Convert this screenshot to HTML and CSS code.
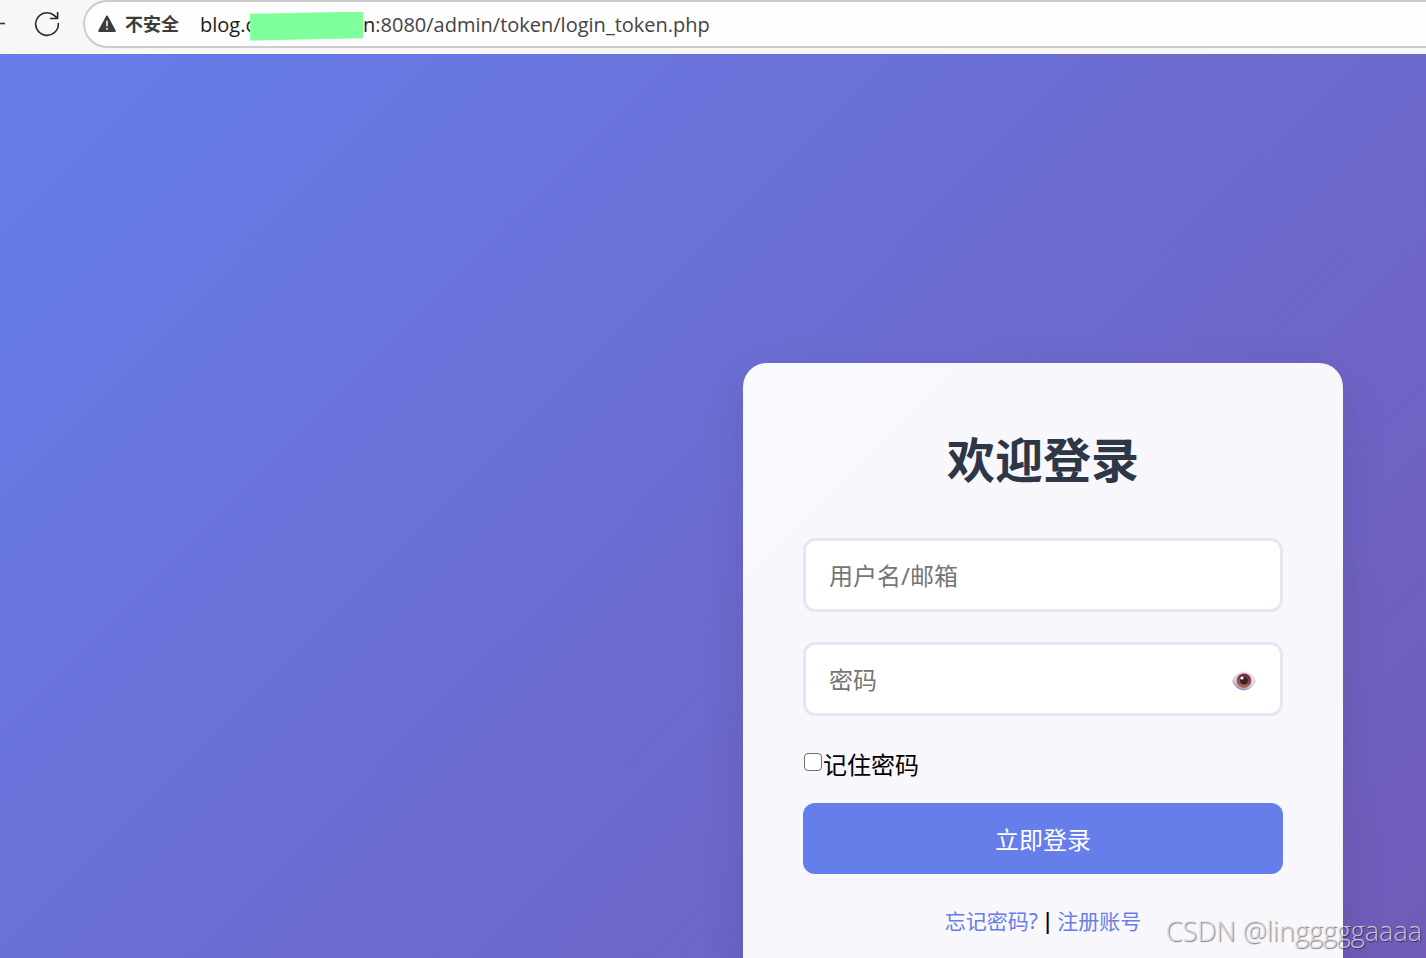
FILE: index.html
```html
<!DOCTYPE html>
<html lang="zh-CN">
<head>
<meta charset="utf-8">
<title>欢迎登录</title>
<link rel="stylesheet" href="styles.css">
</head>
<body>
<header class="toolbar">
  <button class="nav-button back" type="button" aria-label="返回">
    <svg width="6" height="24" viewBox="0 0 6 24" fill="none" stroke="#333" stroke-width="1.6"><path d="M0 11.5h5"/></svg>
  </button>
  <button class="nav-button reload" type="button" aria-label="刷新">
    <svg width="26" height="26" viewBox="0 0 26 26" fill="none" stroke="#2b2b2b" stroke-width="1.6" stroke-linecap="round" stroke-linejoin="round"><path d="M24.300 12.500A11.300 11.300 0 1 1 20.500 4.600L23.400 7.300M23.600 1.500v6h-7"/></svg>
  </button>
  <div class="address">
    <svg class="warning" width="18" height="18" viewBox="0 0 18 18"><path d="M9 1.500 16.800 16H1.200Z" fill="#3c3c3c" stroke="#3c3c3c" stroke-width="2" stroke-linejoin="round"/><path d="M9 6.500v4" stroke="#ddd" stroke-width="1.800" stroke-linecap="round"/><circle cx="9" cy="13.800" r="1.100" fill="#ddd"/></svg>
    <span class="security">不安全</span>
    <span class="url"><span class="host">blog.c</span><span class="mask"></span><span class="host">n</span>:8080/admin/token/login_token.php</span>
  </div>
</header>
<main class="page">
  <form class="card">
    <h1 class="title">欢迎登录</h1>
    <div class="field"><input class="text-input" type="text" placeholder="用户名/邮箱" aria-label="用户名/邮箱"></div>
    <div class="field">
      <input class="text-input" type="password" placeholder="密码" aria-label="密码">
      <button class="reveal" type="button" aria-label="显示密码">
        <svg width="24" height="20" viewBox="0 0 24 20">
          <defs>
            <linearGradient id="white" x1="0.200" y1="1" x2="0.700" y2="0"><stop offset="0" stop-color="#9379b8"/><stop offset="0.400" stop-color="#d2cfd8"/><stop offset="1" stop-color="#e8e8e8"/></linearGradient>
            <linearGradient id="iris" x1="0.600" y1="0" x2="0.400" y2="1"><stop offset="0" stop-color="#6d2340"/><stop offset="1" stop-color="#b4694f"/></linearGradient>
          </defs>
          <path d="M0 10C2 4.500 7 0.500 12 0.500S22 4.500 24 10C22 15.500 17 19.500 12 19.500S2 15.500 0 10Z" fill="url(#white)"/>
          <circle cx="12" cy="9.700" r="7.200" fill="url(#iris)"/>
          <circle cx="12" cy="9.700" r="3.800" fill="#37212a"/>
          <circle cx="10" cy="7" r="1.600" fill="#fff"/>
        </svg>
      </button>
    </div>
    <div class="remember"><input class="tick" type="checkbox" id="remember"><label for="remember">记住密码</label></div>
    <button class="submit" type="submit">立即登录</button>
    <nav class="links"><a href="#">忘记密码?</a> | <a href="#">注册账号</a></nav>
  </form>
  <div class="watermark">CSDN @lingggggaaaa</div>
</main>
</body>
</html>
```
FILE: styles.css
```css
* { box-sizing: border-box; }
body {
  margin: 0;
  height: 100vh;
  display: flex;
  flex-direction: column;
  overflow: hidden;
  font-family: "Noto Sans", "Noto Sans CJK SC", sans-serif;
}
button, input { font: inherit; }
.toolbar {
  flex: none;
  display: flex;
  align-items: flex-start;
  height: 54px;
  background: #f7f7f7;
}
.nav-button {
  display: flex;
  align-items: center;
  height: 48px;
  padding: 0;
  border: 0;
  background: none;
}
.reload { margin: 0 23px 0 28px; }
.address {
  flex: 1;
  display: flex;
  align-items: center;
  height: 48px;
  padding-left: 13px;
  border: 2px solid #cdcdcd;
  border-right: 0;
  border-radius: 24px 0 0 24px;
  background: #fdfdfd;
}
.security {
  margin: 0 21px 2px 9px;
  font: bold 18px "Noto Sans CJK SC", sans-serif;
  color: #3c3c3c;
}
.url {
  display: flex;
  align-items: center;
  font-family: "Open Sans", sans-serif;
  font-size: 20px;
  color: #444;
  white-space: nowrap;
}
.host { color: #1c1c1c; }
.mask {
  width: 113px;
  height: 29px;
  margin: 4px 0 0 -5px;
  background: #80ff9d;
  clip-path: polygon(0 8%, 100% 0, 100% 92%, 0 100%);
}
.page {
  flex: 1;
  min-height: 0;
  display: flex;
  align-items: flex-start;
  justify-content: flex-end;
  position: relative;
  overflow: hidden;
  padding: 309px 83px 0 0;
  background: linear-gradient(135deg, #667eea, #764ba2) 0 0 / 2086px 1262px no-repeat;
}
.card {
  width: 600px;
  padding: 60px;
  border-radius: 24px;
  background: linear-gradient(135deg, #f7faff, #f8f7fc 20%);
  box-shadow: 0 15px 45px rgba(0, 0, 0, 0.1);
}
.title {
  margin: 0 0 41px;
  font-size: 48px;
  line-height: 74px;
  font-weight: bold;
  text-align: center;
  color: #2d3748;
}
.field {
  display: flex;
  position: relative;
  margin-bottom: 30px;
}
.text-input {
  width: 100%;
  height: 74px;
  padding: 0 24px 0 23px;
  border: 3px solid #e2e8f0;
  border-radius: 12px;
  background: #fff;
  font-size: 24px;
}
.text-input::placeholder { color: #757575; }
.reveal {
  display: flex;
  position: absolute;
  right: 27px;
  top: 29px;
  padding: 0;
  border: 0;
  background: none;
}
.remember {
  display: flex;
  align-items: center;
  height: 34px;
  margin-bottom: 23px;
  font-size: 24px;
}
.tick {
  appearance: none;
  width: 18px;
  height: 18px;
  margin: 0 1px 2px;
  border: 1px solid #6f6f6f;
  border-radius: 4px;
  background: #fff;
}
.tick:checked { background: #667eea; }
.submit {
  display: block;
  width: 100%;
  height: 71px;
  border: 0;
  border-radius: 12px;
  background: #667eea;
  color: #fff;
  font-size: 24px;
}
.links {
  margin-top: 29px;
  font-family: "Liberation Sans", sans-serif;
  font-size: 24px;
  line-height: 36px;
  text-align: center;
}
.links a {
  font-family: "Noto Sans", "Noto Sans CJK SC", sans-serif;
  font-size: 21px;
  color: #667eea;
  text-decoration: none;
}
.watermark {
  position: absolute;
  right: 4px;
  bottom: 9px;
  font-family: "Open Sans", sans-serif;
  font-size: 27px;
  font-weight: 300;
  line-height: 36px;
  color: rgba(225, 225, 230, 0.8);
  text-shadow: 1px 1px 1px rgba(0, 0, 0, 0.5);
}
```
